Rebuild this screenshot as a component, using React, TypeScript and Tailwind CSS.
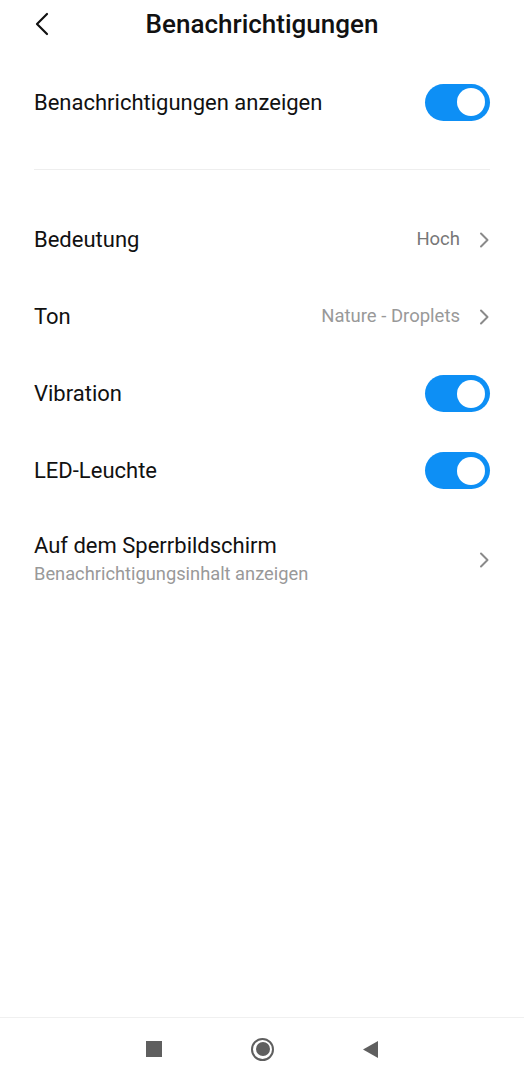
import React, { useState } from 'react';

const FONT = { fontFamily: 'Roboto, "Noto Sans", sans-serif' };

function Toggle({ on, onChange }: { on: boolean; onChange: () => void }) {
  return (
    <button
      onClick={onChange}
      className={`relative flex h-[37px] w-[65px] shrink-0 items-center rounded-full px-[5px] transition-colors ${on ? 'justify-end bg-[#0d8ff5]' : 'justify-start bg-[#d9d9d9]'}`}
    >
      <span className="h-[28px] w-[28px] rounded-full bg-white" />
    </button>
  );
}

function Chevron() {
  return (
    <svg className="h-[18px] w-[12px] shrink-0 text-[#8a8a8a]" viewBox="0 0 12 18" fill="none" stroke="currentColor">
      <path d="M3 2.5l6.5 6.5L3 15.5" strokeWidth={2} strokeLinecap="round" strokeLinejoin="round" />
    </svg>
  );
}

export default function App() {
  const [show, setShow] = useState(true);
  const [vibration, setVibration] = useState(true);
  const [led, setLed] = useState(true);

  return (
    <div className="flex h-[1080px] w-[524px] flex-col bg-white" style={FONT}>
      <div className="grid h-[48px] grid-cols-[1fr_auto_1fr] items-center px-[34px]">
        <button className="justify-self-start">
          <svg className="h-[24px] w-[16px] text-[#111]" viewBox="0 0 16 24" fill="none" stroke="currentColor">
            <path d="M13 2L3 12l10 10" strokeWidth={2.2} strokeLinecap="round" strokeLinejoin="round" />
          </svg>
        </button>
        <h1 className="text-[26px] font-medium text-[#111]">Benachrichtigungen</h1>
        <div />
      </div>

      <div className="flex h-[108px] items-center justify-between px-[34px]">
        <span className="text-[22px] text-[#111]">Benachrichtigungen anzeigen</span>
        <Toggle on={show} onChange={() => setShow(!show)} />
      </div>

      <div className="mx-[34px] mt-[13px] border-t border-[#eeeeee]" />

      <div className="pt-[31px]">
        <div className="flex h-[77px] items-center justify-between px-[34px]">
          <span className="text-[22px] text-[#111]">Bedeutung</span>
          <div className="flex items-center gap-[18px]">
            <span className="text-[18.5px] text-[#777]">Hoch</span>
            <Chevron />
          </div>
        </div>
        <div className="flex h-[77px] items-center justify-between px-[34px]">
          <span className="text-[22px] text-[#111]">Ton</span>
          <div className="flex items-center gap-[18px]">
            <span className="text-[18.5px] text-[#999]">Nature - Droplets</span>
            <Chevron />
          </div>
        </div>
        <div className="flex h-[77px] items-center justify-between px-[34px]">
          <span className="text-[22px] text-[#111]">Vibration</span>
          <Toggle on={vibration} onChange={() => setVibration(!vibration)} />
        </div>
        <div className="flex h-[77px] items-center justify-between px-[34px]">
          <span className="text-[22px] text-[#111]">LED-Leuchte</span>
          <Toggle on={led} onChange={() => setLed(!led)} />
        </div>
        <div className="flex h-[102px] items-center justify-between px-[34px]">
          <div className="flex flex-col">
            <span className="text-[22px] leading-[28px] text-[#111]">Auf dem Sperrbildschirm</span>
            <span className="text-[18.3px] leading-[28px] text-[#999]">Benachrichtigungsinhalt anzeigen</span>
          </div>
          <Chevron />
        </div>
      </div>

      <div className="mt-auto flex h-[63px] items-center justify-center border-t border-[#f0f0f0]">
        <div className="flex w-[232px] items-center justify-between">
          <span className="h-[16px] w-[16px] bg-[#5f5f5f]" />
          <span className="flex h-[23px] w-[23px] items-center justify-center rounded-full border-[2.5px] border-[#5f5f5f]">
            <span className="h-[14px] w-[14px] rounded-full bg-[#5f5f5f]" />
          </span>
          <svg className="h-[17px] w-[15px]" viewBox="0 0 15 17">
            <path d="M15 0v17L0 8.5z" fill="#5f5f5f" />
          </svg>
        </div>
      </div>
    </div>
  );
}
